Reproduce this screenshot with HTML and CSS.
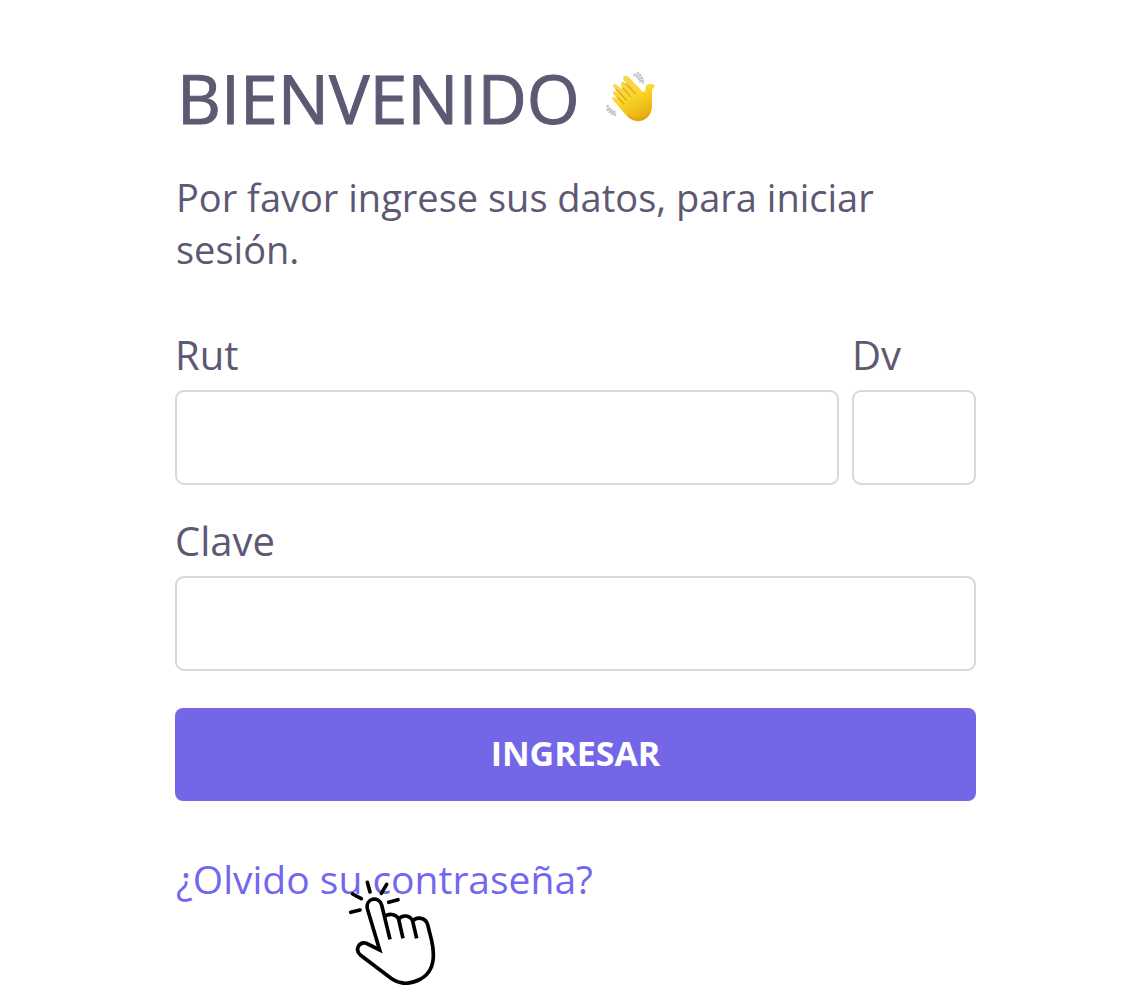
FILE: index.html
```html
<!DOCTYPE html>
<html lang="es">
<head>
<meta charset="utf-8">
<meta name="viewport" content="width=device-width, initial-scale=1">
<title>Bienvenido</title>
<link rel="stylesheet" href="styles.css">
</head>
<body>
<main class="login">
  <h1 class="title">BIENVENIDO
    <svg class="wave" viewBox="0 0 210 210" role="img" aria-label="Mano saludando">
      <defs>
        <linearGradient id="skin" x1="0" y1="0" x2="0.5" y2="1">
          <stop offset="0" stop-color="#f8d65c"/>
          <stop offset="0.55" stop-color="#fad728"/>
          <stop offset="1" stop-color="#e9b012"/>
        </linearGradient>
      </defs>
      <g fill="none" stroke="#c4c5cb" stroke-width="8" stroke-dasharray="7 2">
        <path d="M113 34Q128 40 134 58M123 29Q138 38 142 62M33 126Q40 143 59 148M33 137Q44 153 61 156"/>
      </g>
      <path d="M57 77C45 67 53 58 65 68L81 79C71 66 74 49 87 60L99 71C91 57 75 49 83 41C93 32 103 47 115 60L138 84C147 91 149 82 149 74C149 61 163 62 176 66C179 70 168 74 168 83L168 126C169 150 154 172 133 174C115 177 100 168 87 153L57 118C47 108 45 98 57 104L69 113L56 98C46 88 52 80 63 88L78 100Z" fill="url(#skin)"/>
      <path d="M60 79L91 111M82 76L104 101M90 62L119 92M64 103L84 123" fill="none" stroke="#dfa629" stroke-width="4" stroke-linecap="round"/>
      <path d="M97 159Q133 184 160 149" fill="none" stroke="#e1a21a" stroke-width="5"/>
    </svg>
  </h1>
  <p class="intro">Por favor ingrese sus datos, para iniciar sesión.</p>
  <form class="form">
    <div class="row">
      <div class="field field-rut">
        <label for="rut">Rut</label>
        <input id="rut" type="text">
      </div>
      <div class="field field-dv">
        <label for="dv">Dv</label>
        <input id="dv" type="text" maxlength="1">
      </div>
    </div>
    <div class="field">
      <label for="clave">Clave</label>
      <input id="clave" type="password">
    </div>
    <button class="submit" type="submit">INGRESAR</button>
  </form>
  <div class="recover">
    <a href="#recuperar">¿Olvido su contraseña?</a>
    <svg class="pointer" viewBox="0 0 330 375" aria-hidden="true">
      <path d="M119 243L82 119C76 88 116 79 125 108L133 145C143 132 168 133 176 151C186 136 210 138 218 156C231 142 257 145 263 167L275 215C286 265 281 309 242 330C210 346 184 349 153 328L61 258C44 243 56 217 79 223Z" fill="#fff"/>
      <path d="M150 211L125 108C116 79 76 88 82 119L119 243L79 223C56 217 44 243 61 258L153 328C184 349 210 346 242 330C281 309 286 265 275 215L263 167C257 145 231 142 218 156M133 145C143 132 168 133 176 151L189 208M176 151C186 136 210 138 218 156L230 208" fill="none" stroke="#000" stroke-width="11"/>
      <path d="M82 40L90 69M140 46L124 73M38 75L64 89M32 130L60 123M146 100L174 92" fill="none" stroke="#000" stroke-width="11" stroke-linecap="round"/>
    </svg>
  </div>
</main>
</body>
</html>
```
FILE: styles.css
```css
* {
  box-sizing: border-box;
}

body {
  margin: 0;
  background: #fff;
  color: #5e5873;
  font-family: "Open Sans", "Noto Sans", sans-serif;
  font-size: 38px;
  line-height: 52px;
}

.login {
  padding: 58px 156px 80px 175px;
}

.title {
  display: flex;
  align-items: center;
  gap: 16px;
  margin: 0;
  padding-left: 2px;
  font-size: 68px;
  font-weight: 400;
  line-height: 80px;
  -webkit-text-stroke: 1px currentColor;
}

.wave {
  width: 70px;
  height: 70px;
}

.intro {
  margin: 33px 0 54px;
  padding-left: 1px;
}

.form {
  display: flex;
  flex-direction: column;
}

.row {
  display: flex;
  gap: 13px;
  margin-bottom: 30px;
}

.field {
  display: flex;
  flex-direction: column;
  gap: 9px;
}

.field-rut {
  flex: 1;
}

.field-dv {
  width: 124px;
}

.field label {
  font-size: 40px;
}

.field input {
  width: 100%;
  height: 95px;
  padding: 0 24px;
  border: 2px solid #d8d6de;
  border-radius: 9px;
  background: #fff;
  color: inherit;
  font: inherit;
}

.submit {
  height: 93px;
  margin-top: 37px;
  padding: 0 0 4px;
  border: 0;
  border-radius: 8px;
  background: #7367e8;
  color: #fff;
  font: inherit;
  font-size: 34px;
  font-weight: 700;
}

.recover {
  position: relative;
  margin-top: 52px;
  padding-left: 1px;
  font-size: 39px;
}

.recover a {
  color: #7367f0;
  text-decoration: none;
}

.pointer {
  position: absolute;
  top: 16px;
  left: 165px;
  width: 110px;
  height: 125px;
}
```
